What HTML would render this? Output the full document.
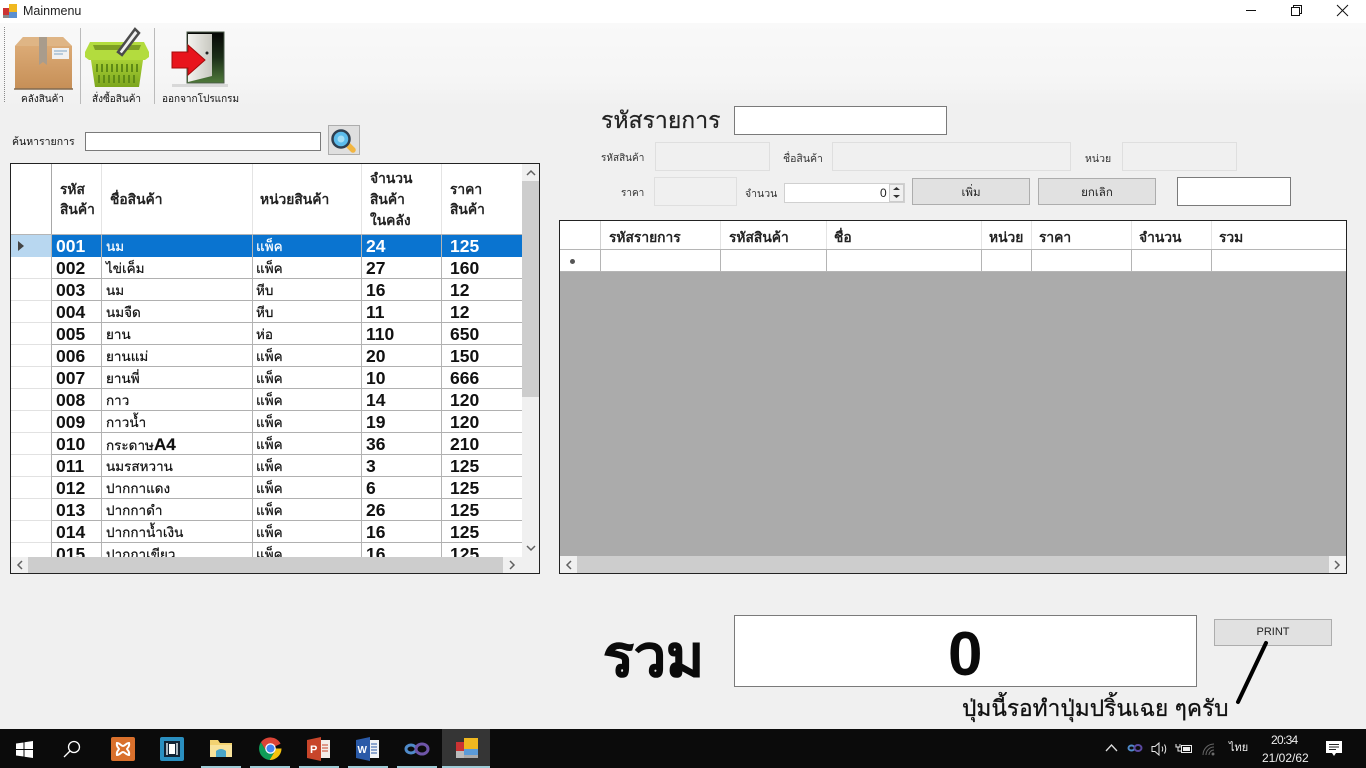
<!DOCTYPE html>
<html lang="th"><head><meta charset="utf-8"><title>Mainmenu</title>
<style>
html,body{margin:0;padding:0;width:1366px;height:768px;overflow:hidden;background:#f0f0f0;font-family:"Liberation Sans","DejaVu Sans","Noto Sans CJK SC",sans-serif;color:#111}
.a{position:absolute}
.t{position:absolute;white-space:nowrap;line-height:1}
.inp{position:absolute;background:#fff;border:1px solid #7a7a7a;box-sizing:border-box}
.dis{position:absolute;background:#f0f0f0;border:1px solid #dfdfdf;box-sizing:border-box}
.btn{position:absolute;background:#e1e1e1;border:1px solid #adadad;box-sizing:border-box;text-align:center;font-size:11.5px;color:#222}
.v{position:absolute;width:1px;background:#b4b4b4}
.h{position:absolute;height:1px;background:#b0b0b0}
.vl{position:absolute;width:1px;background:#e4e4e4}
.row{position:absolute;left:41px;width:470px;height:22px;font-size:13.5px}
.row span{position:absolute;top:4px;line-height:15px;white-space:nowrap;-webkit-text-stroke:.2px currentColor}
.row b{position:absolute;top:2px;font-size:17.5px;line-height:19px;white-space:nowrap}
.c1{left:4px}.c2{left:54px}.c3{left:204px}.c4{left:314px}.c5{left:398px}
.hd{position:absolute;font-weight:bold;font-size:13.8px;line-height:21px;color:#222;white-space:nowrap}
</style></head><body>

<!-- title bar -->
<div class="a" style="left:0;top:0;width:1366px;height:23px;background:#fff"></div>
<svg class="a" style="left:3px;top:4px" width="15" height="15" viewBox="0 0 15 15"><rect x="0" y="4" width="6" height="7" fill="#c33"/><rect x="6" y="0" width="8" height="8" fill="#f0b820"/><rect x="6" y="8" width="8" height="6" fill="#5b8fd0"/><rect x="0" y="11" width="6" height="3" fill="#888"/></svg>
<div class="t" style="left:23px;top:5px;font-size:12.5px;color:#222">Mainmenu</div>
<svg class="a" style="left:1240px;top:0" width="120" height="22" viewBox="0 0 120 22" fill="none" stroke="#111" stroke-width="1"><path d="M6 10.500H16"/><path d="M51.500 7.500h8v8h-8zM53.500 7.500V5.500h8v8h-2"/><path d="M97 5l11 11M108 5L97 16"/></svg>

<!-- toolstrip -->
<div class="a" style="left:0;top:23px;width:1366px;height:84px;background:linear-gradient(#f9f9f9,#f5f5f5 70%,#f0f0f0)"></div>
<div class="a" style="left:4px;top:27px;height:75px;border-left:1px dotted #888"></div>
<div class="a" style="left:80px;top:28px;width:1px;height:76px;background:#bbb"></div>
<div class="a" style="left:154px;top:28px;width:1px;height:76px;background:#bbb"></div>

<svg class="a" style="left:12px;top:34px" width="62" height="58" viewBox="0 0 62 58">
<defs><linearGradient id="bx" x1="0" y1="0" x2="0" y2="1"><stop offset="0" stop-color="#e0b07c"/><stop offset="1" stop-color="#c68f57"/></linearGradient></defs>
<path d="M11 3H51L60 12V55H3V12Z" fill="url(#bx)"/><path d="M3 12L11 3H51L60 12Z" fill="#dfb585"/>
<path d="M27 3h8v28l-4-3-4 3z" fill="#a99c8c"/><rect x="40" y="14" width="17" height="11" fill="#f1f1f1"/><path d="M42 17h13M42 20h9" stroke="#7fa5c5"/>
<path d="M2 55H61" stroke="#806a50" stroke-width="1.500"/></svg>

<svg class="a" style="left:84px;top:27px" width="66" height="64" viewBox="0 0 66 64">
<defs><linearGradient id="bk" x1="0" y1="0" x2="0" y2="1"><stop offset="0" stop-color="#a8d035"/><stop offset="1" stop-color="#7ca61e"/></linearGradient></defs>
<path d="M7 33H59L55 60H11Z" fill="url(#bk)"/>
<path d="M1 25L6 15H60L65 25V30L61 33H5L1 30Z" fill="#b3dc3e"/>
<path d="M9 18H57L55 23H11Z" fill="#7d9f24"/>
<g stroke="#5f8a16" stroke-width="2"><path d="M13 37v8M18 37v8M23 37v8M28 37v8M33 37v8M38 37v8M43 37v8M48 37v8M53 37v8M15 48v8M20 48v8M25 48v8M30 48v8M35 48v8M40 48v8M45 48v8M50 48v8"/></g>
<path d="M34 25L51 2L55 6L38 28Z" fill="#f0f0f0" stroke="#4c4c4c" stroke-width="2.500"/>
</svg>

<svg class="a" style="left:170px;top:30px" width="58" height="58" viewBox="0 0 58 58">
<defs><linearGradient id="dr" x1="0" y1="0" x2="0" y2="1"><stop offset="0" stop-color="#050505"/><stop offset=".5" stop-color="#1c2e18"/><stop offset="1" stop-color="#4f7a3a"/></linearGradient>
<linearGradient id="lf" x1="0" y1="0" x2="1" y2="0"><stop offset="0" stop-color="#f2f2ee"/><stop offset="1" stop-color="#c8c8c0"/></linearGradient></defs>
<rect x="17" y="2" width="37" height="51" fill="url(#dr)" stroke="#4a5a48"/>
<path d="M18 4H42V46L18 52Z" fill="url(#lf)"/>
<path d="M2 22H18V15L35 30L18 45V38H2Z" fill="#e8141c" stroke="#a30a0a"/>
<circle cx="37" cy="23" r="1.500" fill="#222"/></svg>
<div class="a" style="left:172px;top:84px;width:56px;height:3px;background:#d8d8d8"></div>

<div class="t" style="left:21px;top:95px;font-size:10px">คลังสินค้า</div>
<div class="t" style="left:92px;top:95px;font-size:10px">สั่งซื้อสินค้า</div>
<div class="t" style="left:162px;top:95px;font-size:10px">ออกจากโปรแกรม</div>

<!-- search -->
<div class="t" style="left:12px;top:137px;font-size:10.5px">ค้นหารายการ</div>
<div class="inp" style="left:85px;top:132px;width:236px;height:19px"></div>
<div class="a" style="left:328px;top:125px;width:32px;height:30px;background:#dfdfdf;border:1px solid #adadad;box-sizing:border-box"></div>
<svg class="a" style="left:330px;top:127px" width="28" height="26" viewBox="0 0 28 26"><path d="M18 18l5 5" stroke="#f2b642" stroke-width="5.500" stroke-linecap="round"/><circle cx="11" cy="12" r="8.500" fill="#5cbcec" stroke="#2f3f50" stroke-width="2.500"/><circle cx="11" cy="12" r="3.500" fill="#a4def6"/></svg>

<!-- left grid -->
<div class="a" style="left:10px;top:163px;width:530px;height:411px;box-sizing:border-box;border:1px solid #222;background:#fff;overflow:hidden">
  <div class="vl" style="left:40px;top:0;height:71px;background:#a8a8a8"></div>
  <div class="vl" style="left:90px;top:0;height:71px"></div>
  <div class="vl" style="left:241px;top:0;height:71px"></div>
  <div class="vl" style="left:350px;top:0;height:71px"></div>
  <div class="vl" style="left:430px;top:0;height:71px"></div>
  <div class="h" style="left:0;top:70px;width:511px;background:#b5b5b5"></div>
  <div class="hd" style="left:49px;top:16px;line-height:20px">รหัส<br>สินค้า</div>
  <div class="hd" style="left:99px;top:25px">ชื่อสินค้า</div>
  <div class="hd" style="left:249px;top:25px">หน่วยสินค้า</div>
  <div class="hd" style="left:359px;top:4px">จำนวน<br>สินค้า<br>ในคลัง</div>
  <div class="hd" style="left:439px;top:16px;line-height:20px">ราคา<br>สินค้า</div>

  <div class="v" style="left:40px;top:71px;height:322px"></div>
  <div class="v" style="left:90px;top:71px;height:322px"></div>
  <div class="v" style="left:241px;top:71px;height:322px"></div>
  <div class="v" style="left:350px;top:71px;height:322px"></div>
  <div class="v" style="left:430px;top:71px;height:322px"></div>

  <div class="h" style="left:41px;top:92px;width:470px"></div>
  <div class="h" style="left:41px;top:114px;width:470px"></div>
  <div class="h" style="left:41px;top:136px;width:470px"></div>
  <div class="h" style="left:41px;top:158px;width:470px"></div>
  <div class="h" style="left:41px;top:180px;width:470px"></div>
  <div class="h" style="left:41px;top:202px;width:470px"></div>
  <div class="h" style="left:41px;top:224px;width:470px"></div>
  <div class="h" style="left:41px;top:246px;width:470px"></div>
  <div class="h" style="left:41px;top:268px;width:470px"></div>
  <div class="h" style="left:41px;top:290px;width:470px"></div>
  <div class="h" style="left:41px;top:312px;width:470px"></div>
  <div class="h" style="left:41px;top:334px;width:470px"></div>
  <div class="h" style="left:41px;top:356px;width:470px"></div>
  <div class="h" style="left:41px;top:378px;width:470px"></div>

  <div style="position:absolute;left:0;top:71px;width:40px;height:322px;background:repeating-linear-gradient(#fff 0 21px,#e2e2e2 21px 22px)"></div>
  <div style="position:absolute;left:0;top:71px;width:40px;height:22px;background:#b8d7f0"></div>
  <svg style="position:absolute;left:6px;top:77px" width="8" height="10"><path d="M1 0L7 5 1 10Z" fill="#444"/></svg>
  <div style="position:absolute;left:41px;top:71px;width:470px;height:22px;background:#0a74d0"></div>
  <div class="v" style="left:90px;top:71px;height:22px"></div>
  <div class="v" style="left:241px;top:71px;height:22px"></div>
  <div class="v" style="left:350px;top:71px;height:22px"></div>
  <div class="v" style="left:430px;top:71px;height:22px"></div>

  <div class="row" style="top:71px;color:#fff"><b class="c1">001</b><span class="c2">นม</span><span class="c3">แพ็ค</span><b class="c4">24</b><b class="c5">125</b></div>
  <div class="row" style="top:93px"><b class="c1">002</b><span class="c2">ไข่เค็ม</span><span class="c3">แพ็ค</span><b class="c4">27</b><b class="c5">160</b></div>
  <div class="row" style="top:115px"><b class="c1">003</b><span class="c2">นม</span><span class="c3">หีบ</span><b class="c4">16</b><b class="c5">12</b></div>
  <div class="row" style="top:137px"><b class="c1">004</b><span class="c2">นมจืด</span><span class="c3">หีบ</span><b class="c4">11</b><b class="c5">12</b></div>
  <div class="row" style="top:159px"><b class="c1">005</b><span class="c2">ยาน</span><span class="c3">ห่อ</span><b class="c4">110</b><b class="c5">650</b></div>
  <div class="row" style="top:181px"><b class="c1">006</b><span class="c2">ยานแม่</span><span class="c3">แพ็ค</span><b class="c4">20</b><b class="c5">150</b></div>
  <div class="row" style="top:203px"><b class="c1">007</b><span class="c2">ยานพี่</span><span class="c3">แพ็ค</span><b class="c4">10</b><b class="c5">666</b></div>
  <div class="row" style="top:225px"><b class="c1">008</b><span class="c2">กาว</span><span class="c3">แพ็ค</span><b class="c4">14</b><b class="c5">120</b></div>
  <div class="row" style="top:247px"><b class="c1">009</b><span class="c2">กาวน้ำ</span><span class="c3">แพ็ค</span><b class="c4">19</b><b class="c5">120</b></div>
  <div class="row" style="top:269px"><b class="c1">010</b><span class="c2">กระดาษ<strong style="font-size:17px;line-height:15px">A4</strong></span><span class="c3">แพ็ค</span><b class="c4">36</b><b class="c5">210</b></div>
  <div class="row" style="top:291px"><b class="c1">011</b><span class="c2">นมรสหวาน</span><span class="c3">แพ็ค</span><b class="c4">3</b><b class="c5">125</b></div>
  <div class="row" style="top:313px"><b class="c1">012</b><span class="c2">ปากกาแดง</span><span class="c3">แพ็ค</span><b class="c4">6</b><b class="c5">125</b></div>
  <div class="row" style="top:335px"><b class="c1">013</b><span class="c2">ปากกาดำ</span><span class="c3">แพ็ค</span><b class="c4">26</b><b class="c5">125</b></div>
  <div class="row" style="top:357px"><b class="c1">014</b><span class="c2">ปากกาน้ำเงิน</span><span class="c3">แพ็ค</span><b class="c4">16</b><b class="c5">125</b></div>
  <div class="row" style="top:379px"><b class="c1">015</b><span class="c2">ปากกาเขียว</span><span class="c3">แพ็ค</span><b class="c4">16</b><b class="c5">125</b></div>

  <!-- scrollbars -->
  <div style="position:absolute;left:511px;top:0;width:17px;height:393px;background:#f0f0f0"></div>
  <div style="position:absolute;left:511px;top:17px;width:17px;height:216px;background:#cdcdcd"></div>
  <svg style="position:absolute;left:515px;top:5px" width="10" height="7" fill="none" stroke="#606060" stroke-width="1.500"><path d="M1 6L5 2 9 6"/></svg>
  <svg style="position:absolute;left:515px;top:381px" width="10" height="7" fill="none" stroke="#606060" stroke-width="1.500"><path d="M1 1L5 5 9 1"/></svg>
  <div style="position:absolute;left:0;top:393px;width:528px;height:16px;background:#f0f0f0"></div>
  <div style="position:absolute;left:17px;top:393px;width:475px;height:16px;background:#cdcdcd"></div>
  <svg style="position:absolute;left:5px;top:396px" width="7" height="10" fill="none" stroke="#606060" stroke-width="1.500"><path d="M6 1L2 5 6 9"/></svg>
  <svg style="position:absolute;left:498px;top:396px" width="7" height="10" fill="none" stroke="#606060" stroke-width="1.500"><path d="M1 1L5 5 1 9"/></svg>
</div>

<!-- right top form -->
<div class="t" style="left:601px;top:106px;font-size:23px;line-height:28px;color:#222;-webkit-text-stroke:.25px #222">รหัสรายการ</div>
<div class="inp" style="left:734px;top:106px;width:213px;height:29px"></div>

<div class="t" style="left:601px;top:154px;font-size:10px;color:#333">รหัสสินค้า</div>
<div class="dis" style="left:655px;top:142px;width:115px;height:29px"></div>
<div class="t" style="left:783px;top:154px;font-size:10.5px;color:#333">ชื่อสินค้า</div>
<div class="dis" style="left:832px;top:142px;width:239px;height:29px"></div>
<div class="t" style="left:1085px;top:154px;font-size:10.5px;color:#333">หน่วย</div>
<div class="dis" style="left:1122px;top:142px;width:115px;height:29px"></div>

<div class="t" style="left:621px;top:189px;font-size:10px;color:#333">ราคา</div>
<div class="dis" style="left:654px;top:177px;width:83px;height:29px"></div>
<div class="t" style="left:745px;top:189px;font-size:10.5px;color:#333">จำนวน</div>
<div class="inp" style="left:784px;top:183px;width:121px;height:20px;border-color:#d0d0d0"></div>
<div class="t" style="left:880px;top:187px;font-size:12px;color:#222">0</div>
<div class="a" style="left:889px;top:184px;width:15px;height:18px;background:#f0f0f0;border:1px solid #ccc;box-sizing:border-box"></div>
<svg class="a" style="left:892px;top:186px" width="9" height="14"><path d="M1 4L4.500 1 8 4ZM1 9H8L4.500 12Z" fill="#333"/></svg>
<div class="btn" style="left:912px;top:178px;width:118px;height:27px;line-height:28px">เพิ่ม</div>
<div class="btn" style="left:1038px;top:178px;width:118px;height:27px;line-height:28px">ยกเลิก</div>
<div class="inp" style="left:1177px;top:177px;width:114px;height:29px"></div>

<!-- right grid -->
<div class="a" style="left:559px;top:220px;width:788px;height:354px;box-sizing:border-box;border:1px solid #222;background:#ababab;overflow:hidden">
  <div style="position:absolute;left:0;top:0;width:786px;height:51px;background:#fff"></div>
  <div class="h" style="left:0;top:28px;width:786px;background:#b5b5b5"></div>
  <div class="h" style="left:0;top:50px;width:786px;background:#b5b5b5"></div>
  <div class="vl" style="left:40px;top:0;height:28px;background:#d0d0d0"></div>
  <div class="vl" style="left:160px;top:0;height:28px"></div>
  <div class="vl" style="left:266px;top:0;height:28px"></div>
  <div class="vl" style="left:421px;top:0;height:28px"></div>
  <div class="vl" style="left:471px;top:0;height:28px"></div>
  <div class="vl" style="left:571px;top:0;height:28px"></div>
  <div class="vl" style="left:651px;top:0;height:28px"></div>
  <div class="v" style="left:40px;top:28px;height:22px"></div>
  <div class="v" style="left:160px;top:28px;height:22px"></div>
  <div class="v" style="left:266px;top:28px;height:22px"></div>
  <div class="v" style="left:421px;top:28px;height:22px"></div>
  <div class="v" style="left:471px;top:28px;height:22px"></div>
  <div class="v" style="left:571px;top:28px;height:22px"></div>
  <div class="v" style="left:651px;top:28px;height:22px"></div>
  <div class="hd" style="left:49px;top:6px">รหัสรายการ</div>
  <div class="hd" style="left:169px;top:6px">รหัสสินค้า</div>
  <div class="hd" style="left:274px;top:6px">ชื่อ</div>
  <div class="hd" style="left:429px;top:6px">หน่วย</div>
  <div class="hd" style="left:479px;top:6px">ราคา</div>
  <div class="hd" style="left:579px;top:6px">จำนวน</div>
  <div class="hd" style="left:659px;top:6px">รวม</div>
  <div style="position:absolute;left:10px;top:38px;width:5px;height:5px;border-radius:50%;background:#555"></div>

  <div style="position:absolute;left:0;top:335px;width:786px;height:17px;background:#f0f0f0"></div>
  <div style="position:absolute;left:17px;top:335px;width:752px;height:17px;background:#cdcdcd"></div>
  <svg style="position:absolute;left:5px;top:339px" width="7" height="10" fill="none" stroke="#606060" stroke-width="1.500"><path d="M6 1L2 5 6 9"/></svg>
  <svg style="position:absolute;left:774px;top:339px" width="7" height="10" fill="none" stroke="#606060" stroke-width="1.500"><path d="M1 1L5 5 1 9"/></svg>
</div>

<!-- total -->
<div class="t" style="left:603px;top:626px;font-size:57.5px;line-height:62px;font-weight:bold;color:#0a0a0a;-webkit-text-stroke:.8px #0a0a0a">รวม</div>
<div class="inp" style="left:734px;top:615px;width:463px;height:72px"></div>
<div class="t" style="left:948px;top:622px;font-size:62px;line-height:66px;font-weight:bold;color:#0a0a0a">0</div>
<div class="btn" style="left:1214px;top:619px;width:118px;height:27px;line-height:25px;font-size:11px;color:#222">PRINT</div>
<svg class="a" style="left:1230px;top:636px" width="44" height="74"><path d="M36 7L8 66" stroke="#000" stroke-width="4" stroke-linecap="round"/></svg>
<div class="t" style="left:962px;top:694px;font-size:22.700px;line-height:28px;color:#111;-webkit-text-stroke:.3px #111">ปุ่มนี้รอทำปุ่มปริ้นเฉย ๆครับ</div>

<!-- taskbar -->
<div class="a" style="left:0;top:729px;width:1366px;height:39px;background:#0b0b0b"></div>
<div class="a" style="left:442px;top:729px;width:48px;height:39px;background:#353535"></div>
<div class="a" style="left:201px;top:766px;width:40px;height:2px;background:#9ecbd6"></div>
<div class="a" style="left:250px;top:766px;width:40px;height:2px;background:#9ecbd6"></div>
<div class="a" style="left:299px;top:766px;width:40px;height:2px;background:#9ecbd6"></div>
<div class="a" style="left:348px;top:766px;width:40px;height:2px;background:#9ecbd6"></div>
<div class="a" style="left:397px;top:766px;width:40px;height:2px;background:#9ecbd6"></div>
<div class="a" style="left:442px;top:766px;width:48px;height:2px;background:#9ecbd6"></div>

<svg class="a" style="left:16px;top:741px" width="17" height="17" viewBox="0 0 17 17" fill="#fff"><path d="M0 2.500L7.500 1.500V8H0ZM8.500 1.300L17 0V8H8.500ZM0 9H7.500V15.500L0 14.500ZM8.500 9H17V17L8.500 15.700Z"/></svg>
<svg class="a" style="left:63px;top:740px" width="18" height="18" viewBox="0 0 18 18" fill="none" stroke="#fff" stroke-width="1.300"><circle cx="11" cy="7" r="5.500"/><path d="M7 11L1 17"/></svg>
<svg class="a" style="left:111px;top:737px" width="24" height="24" viewBox="0 0 24 24"><rect width="24" height="24" rx="2" fill="#d9702c"/><path d="M6 6c3 0 4 3 6 3s3-3 6-3c1 4-2 5-2 6s3 2 2 6c-3 0-4-3-6-3s-3 3-6 3c-1-4 2-5 2-6S5 10 6 6Z" fill="none" stroke="#fff" stroke-width="2"/></svg>
<svg class="a" style="left:160px;top:737px" width="24" height="24" viewBox="0 0 24 24"><rect width="24" height="24" rx="2" fill="#2a8fc0"/><rect x="4" y="4" width="16" height="16" fill="#123"/><rect x="9" y="7" width="6" height="10" fill="#fff"/><path d="M7 6v12M17 6v12" stroke="#dfe8ec" stroke-width="1.500"/></svg>
<svg class="a" style="left:210px;top:739px" width="22" height="20" viewBox="0 0 22 20"><path d="M0 1H8L10 4H22V18H0Z" fill="#f2d271"/><rect x="0" y="6" width="22" height="12" fill="#f8e39b"/><path d="M6 18V12Q11 8 16 12V18Z" fill="#4aa6c8"/></svg>
<svg class="a" style="left:259px;top:737px" width="23" height="23" viewBox="0 0 24 24"><path d="M12 12L22.500 7A12 12 0 0 0 2 5.500L7 14Z" fill="#db4437"/><path d="M12 12H23.500A12 12 0 0 1 11 24L17 14Z" fill="#f4c20d"/><path d="M2 5.500A12 12 0 0 0 11 24L17 14 7 14Z" fill="#0f9d58"/><circle cx="12" cy="12" r="5.500" fill="#fff"/><circle cx="12" cy="12" r="4.200" fill="#4285f4"/></svg>
<svg class="a" style="left:307px;top:737px" width="24" height="24" viewBox="0 0 24 24"><path d="M0 3L14 0V24L0 21Z" fill="#c8452a"/><rect x="14" y="3" width="9" height="18" fill="#f4ece8"/><path d="M15 8h6M15 11h6M15 14h6" stroke="#c8452a"/><text x="3" y="16" font-size="11" font-weight="bold" fill="#fff" font-family="Liberation Sans">P</text></svg>
<svg class="a" style="left:356px;top:737px" width="24" height="24" viewBox="0 0 24 24"><path d="M0 3L14 0V24L0 21Z" fill="#2a5aa8"/><rect x="14" y="3" width="9" height="18" fill="#f0f2f6"/><path d="M15 7h6M15 10h6M15 13h6M15 16h6" stroke="#2a5aa8"/><text x="1.500" y="16" font-size="10" font-weight="bold" fill="#fff" font-family="Liberation Sans">W</text></svg>
<svg class="a" style="left:404px;top:741px" width="26" height="16" viewBox="0 0 26 16" fill="none" stroke-width="3"><ellipse cx="7" cy="8" rx="5" ry="4" stroke="#4f8ac9"/><ellipse cx="18" cy="8" rx="6" ry="5" stroke="#6e55a8"/></svg>
<svg class="a" style="left:455px;top:738px" width="23" height="21" viewBox="0 0 23 21"><rect x="9" y="0" width="14" height="11" fill="#f0b820"/><rect x="1" y="4" width="8" height="9" fill="#c33"/><rect x="9" y="11" width="14" height="6" fill="#5b9bd8"/><rect x="1" y="13" width="8" height="7" fill="#bbb"/><rect x="9" y="17" width="14" height="3" fill="#aaa"/></svg>

<svg class="a" style="left:1105px;top:743px" width="13" height="9" fill="none" stroke="#ddd" stroke-width="1.300"><path d="M1 8L6.500 2 12 8"/></svg>
<svg class="a" style="left:1127px;top:743px" width="16" height="10" viewBox="0 0 16 10" fill="none" stroke-width="2"><ellipse cx="4.500" cy="5" rx="3" ry="2.500" stroke="#4f8ac9"/><ellipse cx="11" cy="5" rx="3.500" ry="3" stroke="#5a48a0"/></svg>
<svg class="a" style="left:1151px;top:741px" width="18" height="16" viewBox="0 0 18 16" fill="none" stroke="#e8e8e8"><path d="M1 5.500H4L8 2V14L4 10.500H1Z"/><path d="M11 5.500Q12.500 8 11 10.500M13.500 3.500Q16 8 13.500 12.500"/></svg>
<svg class="a" style="left:1175px;top:743px" width="18" height="12" viewBox="0 0 18 12" fill="none" stroke="#eee"><rect x="6.500" y="2.500" width="10" height="7"/><rect x="8" y="4" width="7" height="4" fill="#eee" stroke="none"/><path d="M1 1v3h4V1M3 4v4h3"/></svg>
<svg class="a" style="left:1202px;top:743px" width="14" height="13" viewBox="0 0 14 13" fill="none" stroke="#666"><path d="M1 12A11 11 0 0 1 12 1M4 12A8 8 0 0 1 12 4M7 12A5 5 0 0 1 12 7"/><circle cx="11" cy="11" r="1" fill="#888"/></svg>
<div class="t" style="left:1229px;top:743px;font-size:11px;color:#eee">ไทย</div>
<div class="t" style="left:1271px;top:734px;font-size:12px;letter-spacing:-.7px;color:#eee">20:34</div>
<div class="t" style="left:1262px;top:752px;font-size:12px;color:#eee">21/02/62</div>
<svg class="a" style="left:1326px;top:741px" width="16" height="16" viewBox="0 0 16 16"><path d="M0 0H16V12H10L8 15 6 12H0Z" fill="#fff"/><path d="M3 3.500H13M3 6H13M3 8.500H10" stroke="#222"/></svg>
</body></html>
